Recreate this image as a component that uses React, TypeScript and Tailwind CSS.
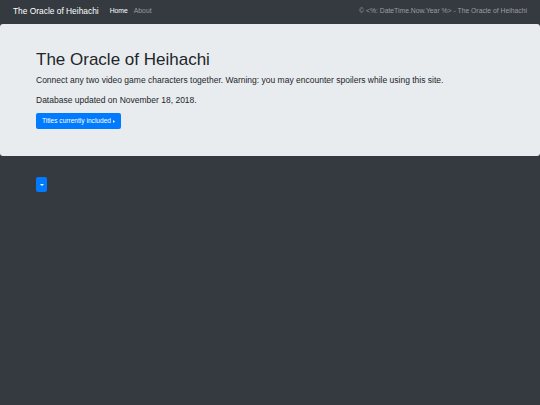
import React from "react";

export default function App() {
  return (
    <div className="min-h-[405px] bg-[#343a40]" style={{ fontFamily: '"Liberation Sans", Arial, sans-serif' }}>
      <nav className="h-[23px] flex items-center px-[13px] bg-[#343a40]">
        <span className="text-[8.4px] text-white mr-[11px]">The Oracle of Heihachi</span>
        <span className="text-[6.8px] text-white mr-[6px]">Home</span>
        <span className="text-[6.8px] text-[#9a9da0]">About</span>
        <span className="ml-auto text-[6.8px] text-[#9a9da0]">© &lt;%: DateTime.Now.Year %&gt; - The Oracle of Heihachi</span>
      </nav>
      <div className="mt-px h-[132px] bg-[#e9ecef] rounded-[3px] px-[36px] pt-[26px] text-[#212529]">
        <h1 className="text-[17px] leading-[20px] font-normal">The Oracle of Heihachi</h1>
        <p className="text-[8.5px] mt-[4px] leading-[12px]">Connect any two video game characters together. Warning: you may encounter spoilers while using this site.</p>
        <p className="text-[8.5px] mt-[8px] leading-[12px]">Database updated on November 18, 2018.</p>
        <button className="mt-[7px] h-[16px] px-[6px] bg-[#007bff] text-white text-[6.6px] rounded-[2px] flex items-center gap-[2px]">
          Titles currently included
          <svg width="2" height="3" viewBox="0 0 2 3"><path d="M0 0 L2 1.5 L0 3 Z" fill="white" /></svg>
        </button>
      </div>
      <div className="px-[36px] pt-[21px]">
        <button className="w-[11px] h-[15px] bg-[#007bff] rounded-[2px] flex items-center justify-center">
          <svg width="4" height="2" viewBox="0 0 4 2"><path d="M0 0 L4 0 L2 2 Z" fill="white" /></svg>
        </button>
      </div>
    </div>
  );
}
